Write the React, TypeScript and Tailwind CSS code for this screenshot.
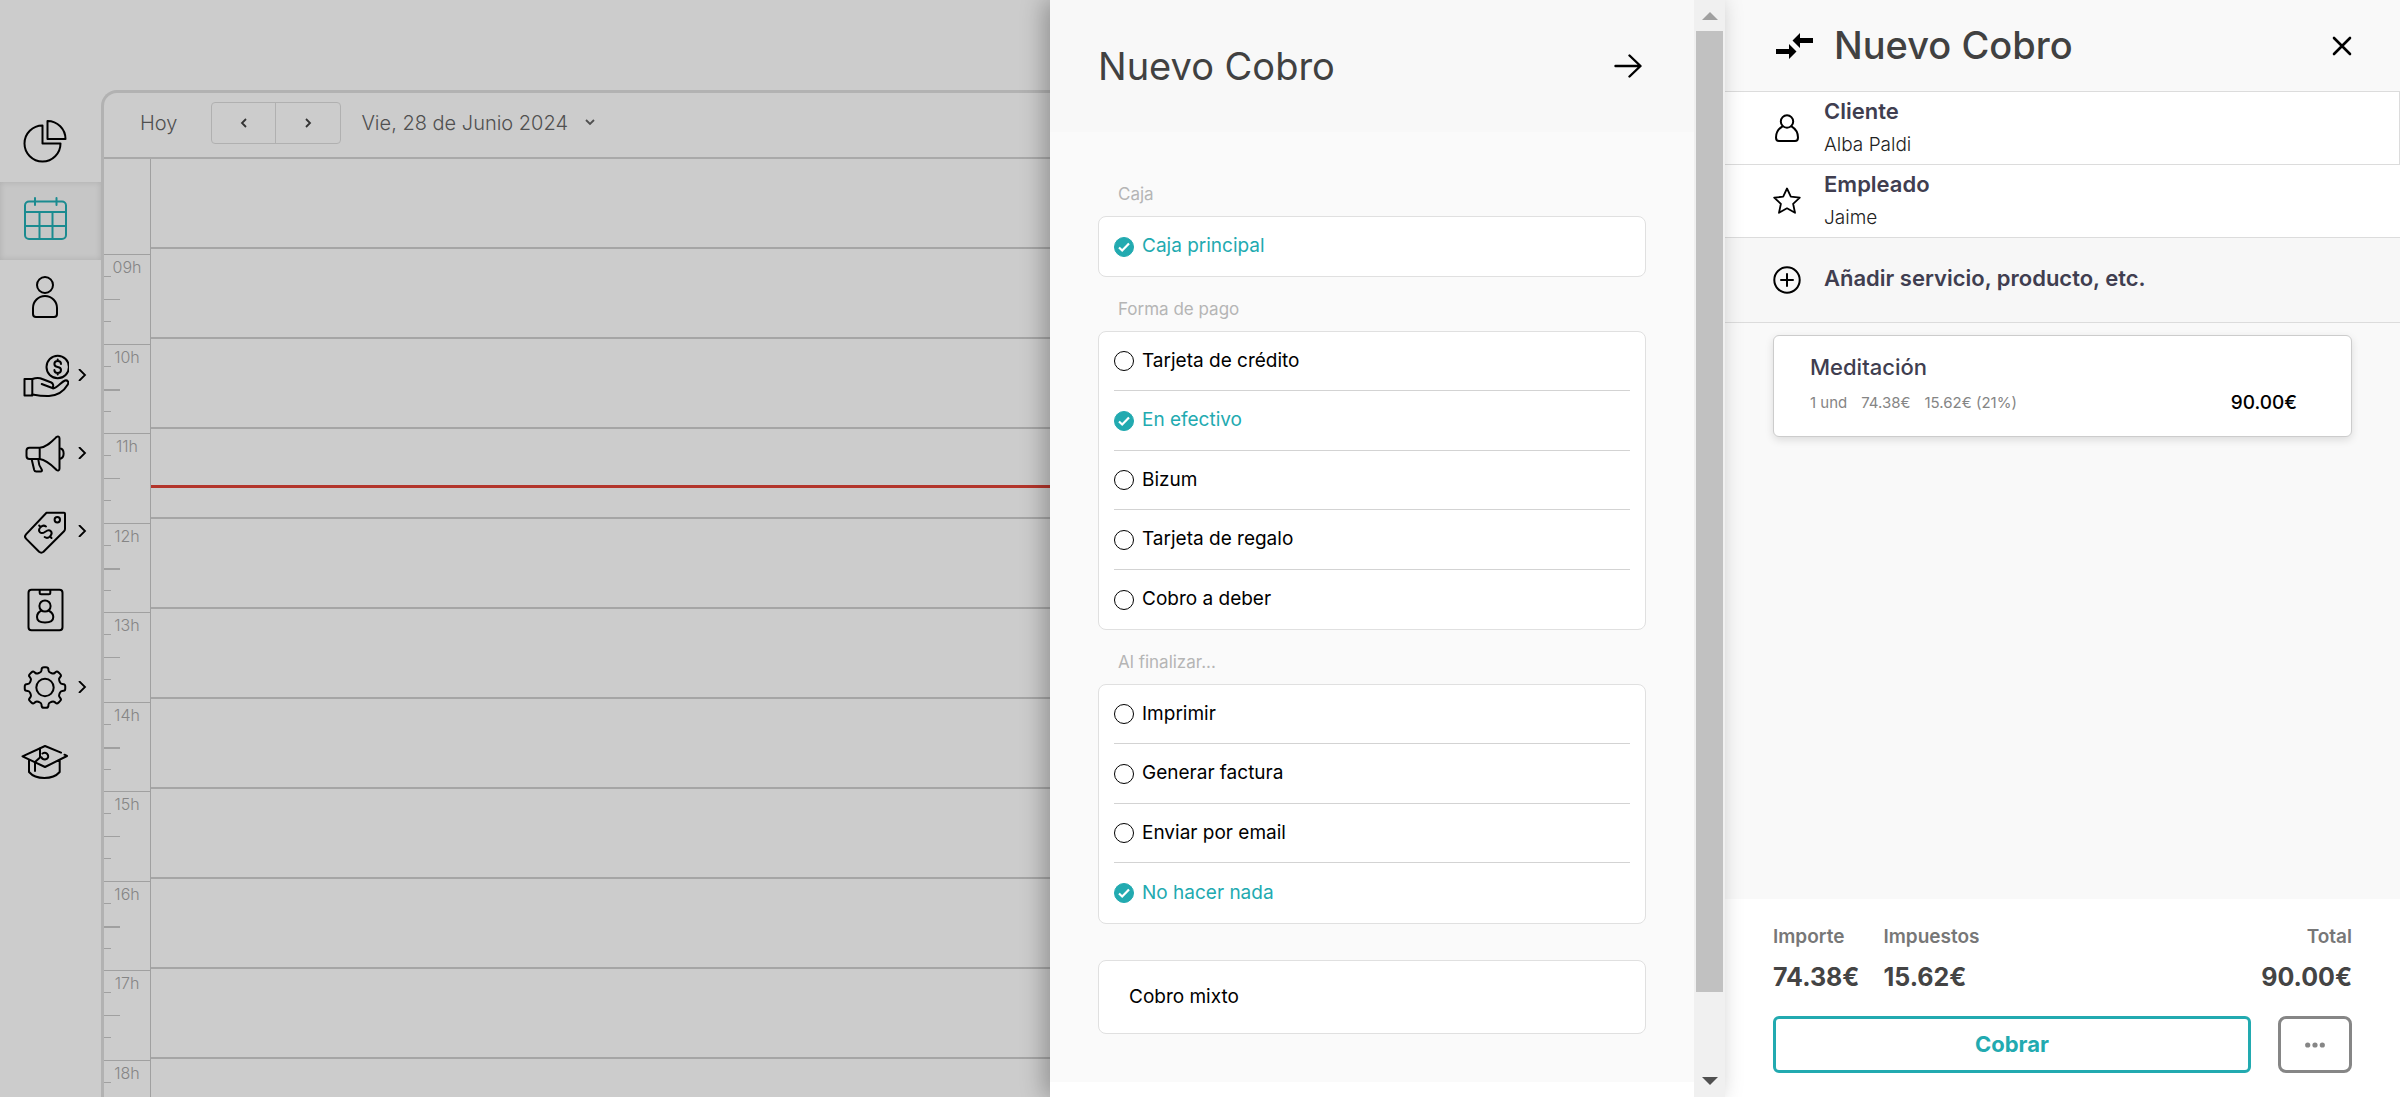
import { useState } from "react";
import type { ReactNode } from "react";

const gearPath = (() => {
  const pts: number[][] = [];
  for (let k = 0; k < 8; k++) {
    for (const [r, a] of [[16, -13], [20.5, -9], [20.5, 9], [16, 13]]) {
      const t = ((k * 45 + a) * Math.PI) / 180;
      pts.push([24 + r * Math.cos(t), 24.5 + r * Math.sin(t)]);
    }
  }
  const mix = (p: number[], q: number[], f: number) =>
    `${(p[0] + (q[0] - p[0]) * f).toFixed(2)} ${(p[1] + (q[1] - p[1]) * f).toFixed(2)}`;
  const n = pts.length;
  return (
    pts
      .map((p, i) => {
        const prev = pts[(i + n - 1) % n];
        const next = pts[(i + 1) % n];
        return `${i ? "L" : "M"}${mix(p, prev, 0.35)}Q${p[0].toFixed(2)} ${p[1].toFixed(2)} ${mix(p, next, 0.35)}`;
      })
      .join("") + "Z"
  );
})();

const menu: { name: string; icon: ReactNode; more?: boolean; active?: boolean }[] = [
  {
    name: "Estadísticas",
    icon: (
      <>
        <path d="M21.5 8.5a18 18 0 1 0 18 18h-18z" />
        <path d="M26.5 4v18h18a18 18 0 0 0-18-18z" />
      </>
    ),
  },
  {
    name: "Agenda",
    active: true,
    icon: (
      <>
        <rect x="4" y="6.5" width="41" height="37.5" rx="4" />
        <path d="M4 17h41M4 31h41M18.5 17v27M31.5 17v27M14 3v7M35.5 3v7" />
      </>
    ),
  },
  {
    name: "Clientes",
    icon: (
      <>
        <circle cx="24" cy="12" r="8" />
        <path d="M12 35a12 12 0 0 1 24 0v6a3 3 0 0 1-3 3H15a3 3 0 0 1-3-3z" />
      </>
    ),
  },
  {
    name: "Ventas",
    more: true,
    icon: (
      <>
        <circle cx="36.7" cy="16" r="11.2" />
        <path d="M40 13c0-2-1.500-3-3.300-3s-3.300 1-3.300 3 1.500 2.700 3.300 3 3.300 1 3.300 3-1.500 3-3.300 3-3.300-1-3.300-3M36.700 8.500V10M36.700 22v1.500" />
        <path d="M3.500 28h7.800v16.500H3.500z" />
        <path d="M11.300 28c4-1.500 7-1.500 10 0l9 3.500c2 1 2.600 3.500 1 5.500l-10.600-4M32 37.500c5-1 8-6.500 12-8 2.500-.6 4.200 1.500 2.800 4C43 40 36 44.500 28 45c-6 .2-11-.5-16.700-1.500" />
      </>
    ),
  },
  {
    name: "Marketing",
    more: true,
    icon: (
      <>
        <path d="M18.700 18.700H8.500a3 3 0 0 0-3 3V27a3 3 0 0 0 3 3h10.200zM18.700 18.700C26 18 31 12.500 35.500 8c1.500-1 3-.5 3 1.500v30c0 2-1.500 2.500-3 1.500C31 36.500 26 31 18.700 30M38.500 19c5.500 1 5.500 10 0 11M10.700 30.500l2.500 10.500c.3 1 1 1.500 2 1.500h4.300c1.500 0 2-1 1-2.300-2-2.700-3-6-3.200-9.700" />
      </>
    ),
  },
  {
    name: "Promociones",
    more: true,
    icon: (
      <>
        <path d="M25.500 5.700H43q1 0 1 1V22q0 1.200-1 2.300L22.500 44.800q-2.200 1.800-4.400 0L5 31.600q-2-2.100 0-4.300z" />
        <circle cx="36.300" cy="12.700" r="2.700" />
        <path
          transform="rotate(-45 24.300 24.700)"
          d="M28.500 21.500c-.4-2.400-2-3.300-4.200-3.300s-4.200 1-4.200 3.200 2 2.900 4.200 3.300 4.200 1.100 4.200 3.300-2 3.300-4.200 3.300-3.900-1-4.200-3.300M24.300 16v2M24.300 31.500v2"
        />
      </>
    ),
  },
  {
    name: "Fichas",
    icon: (
      <>
        <rect x="7.500" y="4.700" width="34" height="40.500" rx="3" />
        <path d="M18.700 5v2.800q0 1.500 1.500 1.500h7.600q1.500 0 1.500-1.500V5" />
        <circle cx="24" cy="21" r="5.600" />
        <path d="M20.500 25.500c-3 1.500-4.500 4-4.500 6.500 0 4 3 5.500 8 5.500s8.300-1.500 8.300-5.500c0-2.500-1.800-5-4.800-6.500" />
      </>
    ),
  },
  {
    name: "Ajustes",
    more: true,
    icon: (
      <>
        <path d={gearPath} />
        <circle cx="24" cy="24.500" r="8.700" />
      </>
    ),
  },
  {
    name: "Ayuda",
    icon: (
      <>
        <path d="M40 11.700 24 5 1.500 15.300 24 26l22-11-2.500-1.300M8 19v12c7 8 23.700 8 30.700 0V19" />
        <path d="M19 7.500v9l-5 4.500v9M21.500 12.500c5-3 8.500 5 2.500 6-2 0-3.200-.9-3.500-2.200" />
      </>
    ),
  },
];

const hours = ["09h", "10h", "11h", "12h", "13h", "14h", "15h", "16h", "17h", "18h"];

const payments = ["Tarjeta de crédito", "En efectivo", "Bizum", "Tarjeta de regalo", "Cobro a deber"];
const endings = ["Imprimir", "Generar factura", "Enviar por email", "No hacer nada"];

function Chevron({ className, d }: { className: string; d: string }) {
  return (
    <svg viewBox="0 0 12 12" fill="none" stroke="currentColor" strokeWidth="1.800" className={className} aria-hidden="true">
      <path d={d} />
    </svg>
  );
}

function Sidebar() {
  return (
    <nav className="w-[101px] shrink-0 pt-[104px]">
      {menu.map((item) => (
        <a
          key={item.name}
          href="#"
          aria-label={item.name}
          className={`flex h-[78px] items-center gap-2 pb-1 pl-[21px] ${
            item.active
              ? "bg-[#c6c6c6] text-[#1b8b90] shadow-[inset_0_0_6px_rgba(0,0,0,0.12)]"
              : "text-black"
          }`}
        >
          <svg
            viewBox="0 0 48 48"
            fill="none"
            stroke="currentColor"
            strokeWidth="2"
            strokeLinecap="round"
            strokeLinejoin="round"
            className="size-12"
          >
            {item.icon}
          </svg>
          {item.more && <Chevron className="size-3" d="M2 0l6 6-6 6" />}
        </a>
      ))}
    </nav>
  );
}

function Agenda() {
  return (
    <main className="mt-[90px] flex min-w-0 flex-1 flex-col overflow-hidden rounded-tl-2xl border-t-[3px] border-l-[3px] border-[#b2b2b2]">
      <div className="flex h-[66px] shrink-0 items-center border-b-2 border-[#a9a9a9] pb-1 pl-9 text-xl font-light text-[#505050]">
        <button type="button">Hoy</button>
        <div className="ml-[34px] flex h-[42px] rounded border border-[#b0b0b0] text-[#333]">
          <button type="button" aria-label="Anterior" className="grid w-16 place-items-center border-r border-[#b0b0b0]">
            <Chevron className="size-3" d="M8 2L4 6l4 4" />
          </button>
          <button type="button" aria-label="Siguiente" className="grid w-16 place-items-center">
            <Chevron className="size-3" d="M4 2l4 4-4 4" />
          </button>
        </div>
        <button type="button" className="ml-5 flex items-center gap-4">
          Vie, 28 de Junio 2024
          <Chevron className="size-3" d="M2 3l4 4 4-4" />
        </button>
      </div>
      <div className="flex min-h-0 flex-1">
        <div className="w-[47px] shrink-0 border-r border-[#a0a0a0] pt-[95px]">
          {hours.map((hour, i) => (
            <div key={hour} className="border-t border-[#a0a0a0] text-center text-base font-light text-[#858585]">
              <div className="h-[21px] leading-6">{hour}</div>
              <div className="h-[23px]">
                <div className="h-px w-[7px] bg-[#a0a0a0]" />
              </div>
              <div className="h-[22px]">
                <div className={i % 2 ? "h-[2px] w-4 bg-[#a0a0a0]" : "h-px w-4 bg-[#a0a0a0]"} />
              </div>
              <div className={i % 2 ? "h-[22px]" : "h-[23px]"}>
                <div className="h-px w-[7px] bg-[#a0a0a0]" />
              </div>
            </div>
          ))}
        </div>
        <div className="relative flex-1">
          {hours.map((hour) => (
            <div key={hour} className="h-[90px] border-b-2 border-[#a5a5a5]" />
          ))}
          <div className="absolute inset-x-0 top-[326px] h-[3px] bg-[#b3352b]" />
        </div>
      </div>
    </main>
  );
}

function Options({ label, name, items, initial }: { label: string; name: string; items: string[]; initial: string }) {
  const [value, setValue] = useState(initial);
  return (
    <section role="radiogroup" aria-labelledby={name}>
      <h3 id={name} className="mt-5 mb-[10px] pl-5 text-[17px] leading-6 text-[#b5b5b5]">
        {label}
      </h3>
      <div className="rounded-lg border border-[#e0e0e0] bg-white px-[15px]">
        {items.map((item) => (
          <label
            key={item}
            className="flex items-center gap-2 border-b border-[#d3d3d3] text-[19px] text-black odd:h-[59px] even:h-[60px] last:border-b-0 has-checked:text-[#22aab0]"
          >
            <span className="grid place-items-center">
              <input
                type="radio"
                name={name}
                checked={value === item}
                onChange={() => setValue(item)}
                className="col-start-1 row-start-1 size-5 appearance-none rounded-full border border-black checked:border-[#22aab0] checked:bg-[#22aab0]"
              />
              {value === item && (
                <svg
                  viewBox="0 0 12 12"
                  fill="none"
                  stroke="white"
                  strokeWidth="2.200"
                  className="pointer-events-none col-start-1 row-start-1 size-3"
                  aria-hidden="true"
                >
                  <path d="M1 6.500l3.200 3L11 2.500" />
                </svg>
              )}
            </span>
            {item}
          </label>
        ))}
      </div>
    </section>
  );
}

function PaymentDrawer() {
  return (
    <aside className="relative z-10 flex w-[675px] shrink-0 bg-white shadow-[-6px_0_22px_rgba(0,0,0,0.28)]">
      <div className="min-w-0 flex-1">
        <header className="flex h-[132px] items-center justify-between bg-[#f8f8f8] px-12">
          <h2 className="text-[38px] text-[#414141]">Nuevo Cobro</h2>
          <button type="button" aria-label="Siguiente" className="pr-1">
            <svg viewBox="0 0 28 24" fill="none" stroke="black" strokeWidth="2.400" strokeLinecap="round" strokeLinejoin="round" className="h-6 w-7">
              <path d="M1.500 12H26M15.500 1.500 26.500 12l-11 10.500" />
            </svg>
          </button>
        </header>
        <div className="bg-[#fafafa] px-12 pt-[30px] pb-12">
          <Options label="Caja" name="caja" items={["Caja principal"]} initial="Caja principal" />
          <Options label="Forma de pago" name="pago" items={payments} initial="En efectivo" />
          <Options label="Al finalizar..." name="final" items={endings} initial="No hacer nada" />
          <button type="button" className="mt-9 flex h-[74px] w-full items-center rounded-lg border border-[#e0e0e0] bg-white pl-[30px] text-[19px] text-black">
            Cobro mixto
          </button>
        </div>
      </div>
      <div className="flex w-[31px] flex-col items-center bg-[#f0f0f0] py-3">
        <svg viewBox="0 0 16 8" className="h-2 w-4 shrink-0 fill-[#a0a0a0]" aria-hidden="true">
          <path d="M8 0l8 8H0z" />
        </svg>
        <div className="mt-[11px] mb-[85px] w-[27px] flex-1 bg-[#c1c1c1]" />
        <svg viewBox="0 0 16 8" className="h-2 w-4 shrink-0 fill-[#505050]" aria-hidden="true">
          <path d="M0 0h16L8 8z" />
        </svg>
      </div>
    </aside>
  );
}

function TicketIcon({ children }: { children: ReactNode }) {
  return (
    <svg viewBox="0 0 28 28" fill="none" stroke="black" strokeWidth="2" strokeLinecap="round" strokeLinejoin="round" className="size-7 shrink-0" aria-hidden="true">
      {children}
    </svg>
  );
}

function TicketPanel() {
  return (
    <aside className="flex w-[675px] shrink-0 flex-col bg-[#f9f9f9] text-[#403e50]">
      <header className="flex h-[92px] shrink-0 items-center border-b border-[#dcdcdc] pr-12 pl-[51px]">
        <svg viewBox="0 0 38 26" className="h-[26px] w-[38px]" aria-hidden="true">
          <path d="M0 16h13v-5l7.500 7.500L13 26v-5H0zM37 5H24V0l-7.500 7.500L24 15v-5h13z" />
        </svg>
        <h2 className="ml-5 text-[38px] font-medium text-[#414141]">Nuevo Cobro</h2>
        <button type="button" aria-label="Cerrar" className="ml-auto">
          <svg viewBox="0 0 20 20" fill="none" stroke="black" strokeWidth="2.600" strokeLinecap="round" className="size-5">
            <path d="M2 2l16 16M18 2L2 18" />
          </svg>
        </button>
      </header>
      <button type="button" className="flex h-[73px] shrink-0 items-center gap-[23px] border-r border-b border-[#dcdcdc] bg-white pl-12 text-left">
        <TicketIcon>
          <circle cx="14" cy="7.500" r="6.200" />
          <path d="M9.500 12.300C5 15 3 18.500 3 23.500Q3 27 6 27h16q3 0 3-3.500c0-5-2-8.500-6.500-11.200" />
        </TicketIcon>
        <span>
          <span className="block text-[22px] leading-[34px] font-semibold">Cliente</span>
          <span className="block text-[19px] leading-[34px] font-light text-[#222]">Alba Paldi</span>
        </span>
      </button>
      <button type="button" className="flex h-[73px] shrink-0 items-center gap-[23px] border-b border-[#dcdcdc] bg-white pl-12 text-left">
        <TicketIcon>
          <path strokeWidth="1.800" d="M14 1.500l3.800 8.200 9 1-6.700 6.100 1.900 9L14 21.300l-8 4.500 1.900-9-6.700-6.100 9-1z" />
        </TicketIcon>
        <span>
          <span className="block text-[22px] leading-[34px] font-semibold">Empleado</span>
          <span className="block text-[19px] leading-[34px] font-light text-[#222]">Jaime</span>
        </span>
      </button>
      <button type="button" className="flex h-[85px] shrink-0 items-center gap-[23px] border-b border-[#dcdcdc] bg-[#f7f7f7] pl-12 text-left">
        <TicketIcon>
          <circle cx="14" cy="14" r="12.700" />
          <path d="M14 8v12M8 14h12" />
        </TicketIcon>
        <span className="pb-1 text-[22px] font-semibold">Añadir servicio, producto, etc.</span>
      </button>
      <article className="mx-12 mt-3 h-[102px] rounded-md border border-[#ccc] bg-white pt-[13px] pr-[54px] pl-9 shadow-[0_3px_8px_rgba(0,0,0,0.12)]">
        <h3 className="text-[22px] leading-9 font-medium">Meditación</h3>
        <div className="flex gap-[14px] text-[15px] leading-9 text-[#858585]">
          <span>1 und</span>
          <span>74.38€</span>
          <span>15.62€ (21%)</span>
          <span className="ml-auto text-[19px] leading-9 font-medium text-black">90.00€</span>
        </div>
      </article>
      <footer className="mt-auto bg-white px-12 pt-[18px] pb-6">
        <dl className="flex gap-6 text-[25px] leading-10 font-bold text-[#444]">
          <div>
            <dt className="text-[19px] leading-10 font-semibold text-[#777]">Importe</dt>
            <dd>74.38€</dd>
          </div>
          <div>
            <dt className="text-[19px] leading-10 font-semibold text-[#777]">Impuestos</dt>
            <dd>15.62€</dd>
          </div>
          <div className="ml-auto text-right">
            <dt className="text-[19px] leading-10 font-semibold text-[#777]">Total</dt>
            <dd>90.00€</dd>
          </div>
        </dl>
        <div className="mt-[19px] flex h-[57px] gap-[27px]">
          <button type="button" className="flex-1 rounded-md border-[3px] border-[#22aab0] text-[22px] font-bold text-[#22aab0]">
            Cobrar
          </button>
          <button type="button" aria-label="Más opciones" className="grid w-[74px] place-items-center rounded-lg border-[3px] border-[#868686]">
            <svg viewBox="0 0 20 6" className="h-[6px] w-5 fill-[#868686]">
              <circle cx="2.700" cy="3" r="2.600" />
              <circle cx="10" cy="3" r="2.600" />
              <circle cx="17.300" cy="3" r="2.600" />
            </svg>
          </button>
        </div>
      </footer>
    </aside>
  );
}

export default function App() {
  return (
    <div className="flex h-screen overflow-hidden bg-[#ccc] font-['Inter',sans-serif]">
      <Sidebar />
      <Agenda />
      <PaymentDrawer />
      <TicketPanel />
    </div>
  );
}
